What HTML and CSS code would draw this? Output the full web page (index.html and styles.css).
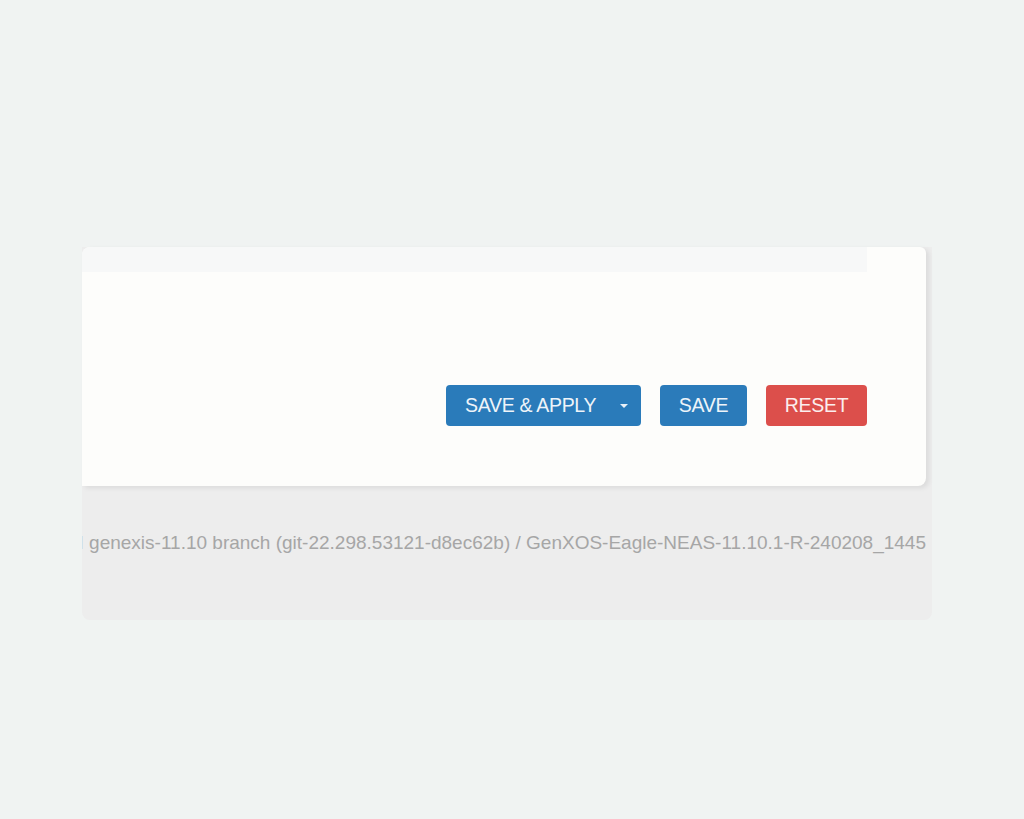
FILE: index.html
```html
<!DOCTYPE html>
<html lang="en">
<head>
    <meta charset="UTF-8">
    <title>Settings</title>
    <link rel="stylesheet" href="styles.css">
</head>
<body>
    <div class="page">
        <div class="panel">
            <div class="card">
                <div class="tabbar"></div>
                <div class="actions">
                    <div class="btn-group">
                        <button class="btn btn-apply">SAVE &amp; APPLY</button>
                        <button class="btn btn-caret">
                            <svg width="10" height="6" viewBox="0 0 10 6"><path d="M1 1h8L5 5z" fill="#e9f1f8"/></svg>
                        </button>
                    </div>
                    <button class="btn btn-save">SAVE</button>
                    <button class="btn btn-reset">RESET</button>
                </div>
            </div>
            <footer class="footer">
                <span>Powered by LuCI genexis-11.10 branch (git-22.298.53121-d8ec62b) / GenXOS-Eagle-NEAS-11.10.1-R-240208_1445</span>
            </footer>
        </div>
    </div>
</body>
</html>
```

FILE: styles.css
```css
body {
    margin: 0;
    background: #f0f3f2;
    font-family: 'Liberation Sans', Arial, sans-serif;
}

.page {
    padding: 247px 0 0 82px;
}

.panel {
    width: 850px;
    height: 373px;
    background: #ededed;
    border-radius: 0 0 8px 8px;
    display: flex;
    flex-direction: column;
}

.card {
    width: 844px;
    height: 239px;
    box-sizing: border-box;
    background: #fdfdfb;
    border-radius: 8px 6px 8px 0;
    box-shadow: 3px 2px 5px rgba(0,0,0,0.08);
    padding-right: 59px;
}

.tabbar {
    height: 25px;
    width: 785px;
    background: #f7f8f8;
    border-top-left-radius: 8px;
}

.actions {
    display: flex;
    justify-content: flex-end;
    gap: 19px;
    margin-top: 113px;
}

.btn {
    height: 41px;
    border: none;
    border-radius: 4px;
    color: #eef4f9;
    font-family: 'Liberation Sans', Arial, sans-serif;
    font-size: 19.5px;
    letter-spacing: -0.3px;
    padding: 0;
    cursor: pointer;
}

.btn-group {
    display: flex;
}

.btn-apply {
    background: #2a7bba;
    border-radius: 4px 0 0 4px;
    width: 161px;
    text-align: left;
    padding-left: 19px;
}

.btn-caret {
    background: #2a7bba;
    border-radius: 0 4px 4px 0;
    width: 34px;
    display: flex;
    align-items: center;
    justify-content: center;
}

.btn-save {
    background: #2b7bba;
    width: 87px;
}

.btn-reset {
    background: #dc4f4b;
    width: 101px;
    color: #fbeeee;
}

.footer {
    flex: 1;
    display: flex;
    justify-content: flex-end;
    overflow: hidden;
    white-space: nowrap;
    padding: 46px 6px 0 0;
    color: #a6a6a6;
    font-size: 19px;
}
```
